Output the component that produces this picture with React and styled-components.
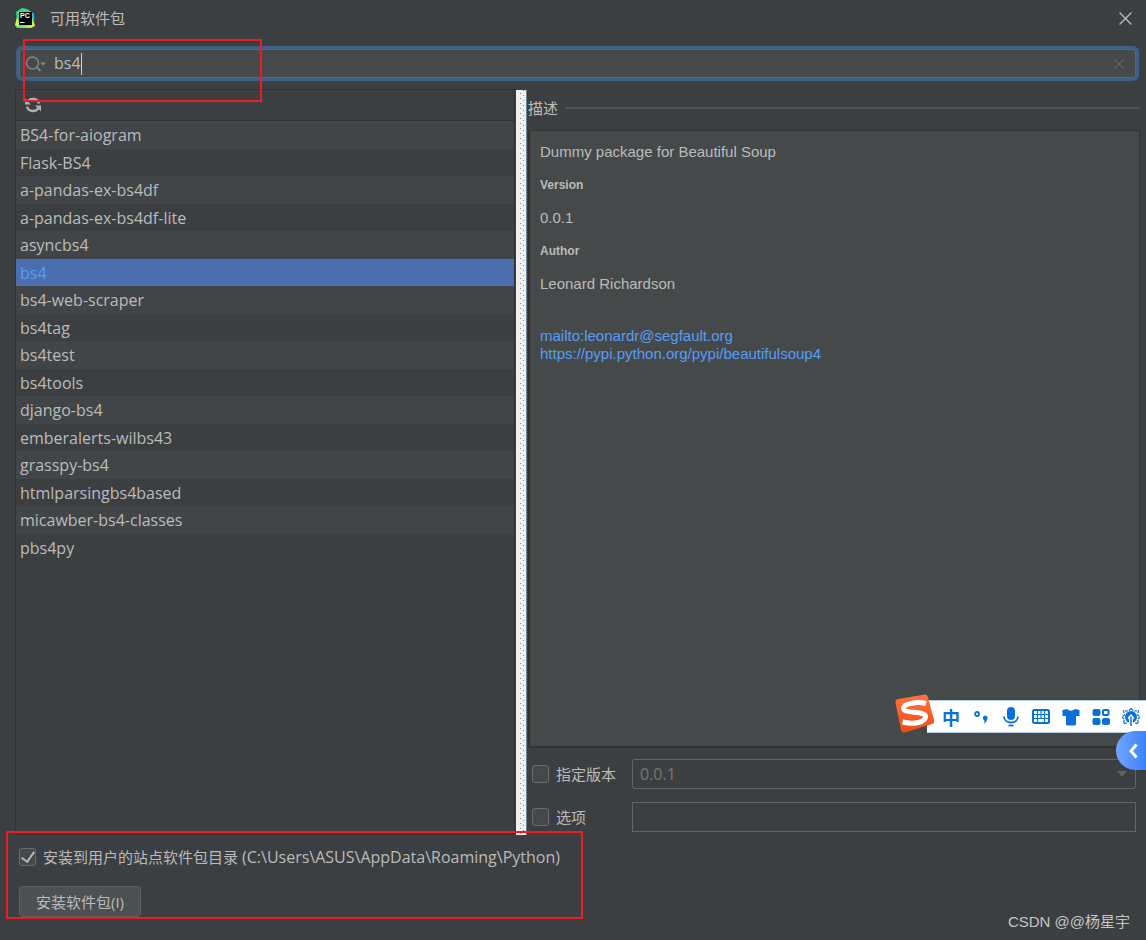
import React, { useState } from 'react';
import styled, { createGlobalStyle } from 'styled-components';

const uiFont = '"Open Sans", "Noto Sans CJK SC", sans-serif';

const GlobalStyle = createGlobalStyle`
  * { box-sizing: border-box; }
  body {
    margin: 0;
    background: #3c3f41;
    color: #bbbbbb;
    font: 15px/20px ${uiFont};
  }
  button, input, select { font: inherit; color: inherit; }
`;

const Dialog = styled.div`
  position: relative;
  display: flex;
  flex-direction: column;
  min-height: 100vh;
  padding: 0 6px 0 15px;
  overflow: hidden;
`;

const TitleBar = styled.header`
  display: flex;
  align-items: center;
  gap: 15px;
  height: 36px;
  margin-bottom: 10px;
`;

const Title = styled.h1`
  flex: 1;
  margin: 0;
  font-size: 15px;
  font-weight: 400;
`;

const IconButton = styled.button`
  display: flex;
  align-items: center;
  justify-content: center;
  width: ${p => p.$size}px;
  height: ${p => p.$size}px;
  padding: 0;
  border: 0;
  background: none;
  color: ${p => p.$color};
`;

const SearchArea = styled.div`
  position: relative;
  margin: 0 1px 8px;
`;

const SearchField = styled.label`
  display: flex;
  align-items: center;
  gap: 7px;
  height: 35px;
  padding: 0 10px 0 6px;
  border: 3px solid #3d6185;
  border-radius: 6px;
  background: #45494a;
  box-shadow: inset 0 0 0 1px #466d94;
`;

const SearchInput = styled.input.attrs({ type: 'text' })`
  flex: 1;
  min-width: 0;
  height: 24px;
  padding: 0 0 2px;
  border: 0;
  outline: 0;
  background: none;
  font-size: 16px;
`;

const Typed = styled.span`
  flex: 1;
  display: grid;
  align-items: center;
  font-size: 16px;
  > * { grid-area: 1 / 1; }
`;

const Caret = styled.span`
  display: flex;
  align-items: center;
  pointer-events: none;
  i { visibility: hidden; font-style: normal; }
  &::after { content: ''; width: 1px; height: 22px; background: #d0d0d0; }
`;

const Highlight = styled.div`
  position: absolute;
  top: ${p => p.$top}px;
  left: ${p => p.$left}px;
  width: ${p => p.$width}px;
  height: ${p => p.$height}px;
  border: 2px solid #ed1c24;
  pointer-events: none;
  z-index: 2;
`;

const Main = styled.main`
  flex: 1;
  display: grid;
  grid-template-columns: 500fr 13px 612fr;
`;

const PackagePane = styled.section`
  display: flex;
  flex-direction: column;
  min-width: 0;
  border: 1px solid #323232;
`;

const Toolbar = styled.div`
  display: flex;
  align-items: center;
  height: 31px;
  padding-left: 8px;
  border-bottom: 1px solid #323232;
`;

const PackageList = styled.ul`
  margin: 0;
  padding: 0;
  list-style: none;
  font-size: 16px;
`;

const PackageRow = styled.li`
  height: 27px;
  padding-left: 4px;
  line-height: 28px;
  white-space: nowrap;
  &:nth-child(odd) { height: 28px; background: #414547; }
  &&[aria-selected='true'] { background: #4b6eaf; color: #589df6; }
`;

const Splitter = styled.div`
  margin: 1px 1px 0;
  border-right: 1px solid #6b7f95;
  background:
    repeating-linear-gradient(#f0f0f0 0 3px, #7f8b97 3px 4px, #f0f0f0 4px 5px) 4px 0 / 1px 100% no-repeat,
    repeating-linear-gradient(#7f8b97 0 1px, #f0f0f0 1px 5px) 7px 0 / 1px 100% no-repeat,
    #f0f0f0;
`;

const DetailPane = styled.section`
  display: flex;
  flex-direction: column;
  min-width: 0;
`;

const SectionTitle = styled.h2`
  display: flex;
  align-items: center;
  gap: 7px;
  height: 38px;
  margin: 0 0 3px;
  font-size: 15px;
  font-weight: 400;
  &::after { content: ''; flex: 1; height: 2px; background: #515151; }
`;

const Description = styled.article`
  flex: 1;
  padding: 12px 10px;
  border: 1px solid #323232;
  border-width: 1px 1px 2px 2px;
  background: #45494a;
  font: 15px/18px "Liberation Sans", sans-serif;
  p { margin: 0 0 15px; }
  h3 { margin: 0 0 15px; font-size: 12px; line-height: 18px; }
`;

const Links = styled.div`
  display: flex;
  flex-direction: column;
  align-items: flex-start;
  padding-top: 19px;
  a { color: #589df6; text-decoration: none; }
`;

const OptionGrid = styled.div`
  display: grid;
  grid-template-columns: 100px minmax(0, 1fr);
  row-gap: 13px;
  padding: 11px 4px 3px;
`;

const CheckLabel = styled.label`
  display: flex;
  align-items: center;
  gap: 7px;
`;

const Path = styled.span`
  margin-left: -3px;
  font-size: 16px;
`;

const Check = styled.input.attrs({ type: 'checkbox' })`
  appearance: none;
  display: grid;
  place-items: center;
  width: 17px;
  height: 18px;
  margin: 0;
  border: 1px solid #6b6b6b;
  border-radius: 3px;
  background: #43494a;
  &:checked::after {
    content: '';
    width: 6px;
    height: 11px;
    margin-bottom: 3px;
    border: solid #bbbbbb;
    border-width: 0 2px 2px 0;
    transform: rotate(35deg);
  }
`;

const SelectBox = styled.div`
  display: grid;
  align-items: center;
  > * { grid-area: 1 / 1; }
  > svg { justify-self: end; margin-right: 8px; pointer-events: none; }
`;

const VersionSelect = styled.select`
  appearance: none;
  width: 100%;
  height: 30px;
  padding: 0 7px;
  border: 1px solid #646464;
  border-radius: 3px;
  background: #3c3f41;
  color: #777777;
  font-size: 16px;
  opacity: 1;
`;

const OptionInput = styled.input.attrs({ type: 'text' })`
  width: 100%;
  height: 30px;
  padding: 0 7px;
  border: 1px solid #646464;
  background: #3c3f41;
`;

const Footer = styled.footer`
  position: relative;
  display: flex;
  flex-direction: column;
  align-items: flex-start;
  gap: 19px;
  padding: 12px 4px 23px;
`;

const InstallButton = styled.button`
  height: 31px;
  padding: 0 16px;
  border: 1px solid #5e6060;
  border-radius: 4px;
  background: #4c5052;
`;

const Watermark = styled.span`
  position: absolute;
  right: 10px;
  bottom: 8px;
  color: #c4c5c6;
  font: 15px/20px "Liberation Sans", "Noto Sans CJK SC", sans-serif;
`;

const ImeBar = styled.aside`
  position: absolute;
  top: 694px;
  right: 0;
  display: flex;
  align-items: flex-start;
  z-index: 3;
  > svg { z-index: 1; }
`;

const ImeTools = styled.div`
  display: flex;
  align-items: center;
  gap: 10px;
  height: 33px;
  margin: 6px 0 0 -8px;
  padding: 0 5px 0 14px;
  border: solid #b5cbe0;
  border-width: 1px 0;
  background: #ffffff;
`;

const ImeMode = styled.button`
  width: 20px;
  padding: 0;
  border: 0;
  background: none;
  color: #0a6fdb;
  font: 700 18px/20px "Noto Sans CJK SC", sans-serif;
`;

const SideTab = styled.button`
  position: absolute;
  top: 731px;
  right: 0;
  display: flex;
  align-items: center;
  justify-content: flex-end;
  width: 30px;
  height: 39px;
  padding: 0 7px 0 0;
  border: 0;
  border-radius: 20px 0 0 20px;
  background: linear-gradient(90deg, #72a5ff, #3b82fa);
  z-index: 4;
`;

const Logo = () => (
  <svg width="20" height="20" viewBox="0 0 20 20" aria-hidden="true">
    <defs>
      <linearGradient id="pcA" x1="0" y1="0" x2="1" y2="1">
        <stop offset="0" stopColor="#21d789" /><stop offset=".5" stopColor="#3be07a" /><stop offset="1" stopColor="#fcf84a" />
      </linearGradient>
    </defs>
    <path d="M1 4 7 0l5 1 3 2 4 3-1 4 2 8-4 2H2L0 17l2-4z" fill="url(#pcA)" />
    <path d="M15 3l4 3 .5 6-3-3z" fill="#07c3f2" />
    <path d="M0 17l2-8 3 8-2 2z" fill="#d9f24f" />
    <rect x="4" y="4" width="13" height="13" fill="#000" />
    <text x="5" y="10" fill="#fff" fontFamily="Liberation Sans, sans-serif" fontWeight="700" fontSize="7">PC</text>
    <path d="M5 14.500h4.500" stroke="#fff" strokeWidth="1" />
  </svg>
);

const Cross = ({ size }) => (
  <svg width={size} height={size} viewBox="0 0 12 12" aria-hidden="true">
    <path d="M.5.5l11 11M11.500.5l-11 11" stroke="currentColor" strokeWidth="1.200" />
  </svg>
);

const SearchIcon = () => (
  <svg width="22" height="18" viewBox="0 0 22 18" fill="none" aria-hidden="true">
    <circle cx="7.500" cy="8" r="6" stroke="#7f8688" strokeWidth="1.500" />
    <path d="M11.500 12l4 4" stroke="#7f8688" strokeWidth="1.800" />
    <path d="M15 7.500h6l-3 3.500z" fill="#7f8688" />
  </svg>
);

const RefreshIcon = () => (
  <svg width="18" height="16" viewBox="0 0 18 16" fill="none" aria-hidden="true">
    <path d="M3.500 5A6.200 5.800 0 0 1 15 6.500M14.500 11A6.200 5.800 0 0 1 3 9.500" stroke="#afb1b3" strokeWidth="2.400" />
    <path d="M1 1.500v6h6zM17 14.500v-6h-6z" fill="#afb1b3" />
  </svg>
);

const SogouLogo = () => (
  <svg width="40" height="40" viewBox="0 0 40 40" aria-hidden="true">
    <defs>
      <linearGradient id="sogou" x1="0" y1="0" x2="0" y2="1">
        <stop offset="0" stopColor="#ff7340" /><stop offset="1" stopColor="#f04b12" />
      </linearGradient>
    </defs>
    <path d="M3 5 30 .5q2-.2 2.800 2L39 26q.8 3-2 4L10 38.500q-3 .5-4-2.500L.5 9Q.2 5.800 3 5z" fill="url(#sogou)" />
    <path d="M31 9.500C23 7.500 8.500 9 8.500 14.500c0 5.500 23 2 22 8.500-1 6-13 7.500-23 5" fill="none" stroke="#fff" strokeWidth="5" />
  </svg>
);

const ImeIcon = ({ children }) => (
  <svg width="20" height="20" viewBox="0 0 20 20" fill="none" stroke="#0a6fdb" aria-hidden="true">{children}</svg>
);

const imeTools = [
  ['标点', <g key="g"><circle cx="6" cy="7" r="2" strokeWidth="1.800" /><path d="M12 11a2.300 2.300 0 1 1 4.300 1q-.5 3.500-3.500 5 .8-1.500.8-3.200-1.600-.5-1.600-2.800z" fill="#0a6fdb" stroke="none" /></g>],
  ['语音', <g key="g"><rect x="6" y="0" width="8" height="13" rx="4" fill="#0a6fdb" stroke="none" /><path d="M3 9.500c0 8 14 8 14 0" strokeWidth="1.800" /><path d="M7.500 18.500h5" strokeWidth="1.800" /></g>],
  ['键盘', <g key="g"><rect x="2" y="3" width="16" height="13" rx="1.500" strokeWidth="2" /><path d="M3 7.500h14M3 11.500h14" strokeWidth="1.200" /><path d="M6.500 4v7.500M10 4v7.500M13.500 4v7.500M6.500 12v4M13.500 12v4" strokeWidth="1.200" /></g>],
  ['皮肤', <path key="g" d="M6 2q4 3.500 8 0l4.500 1v6h-3.500v8q0 1.500-1.500 1.500h-7Q5 18.500 5 17V9H1.500V3z" fill="#0a6fdb" stroke="none" />],
  ['工具箱', <g key="g" fill="#0a6fdb" stroke="none"><rect x="1.500" y="2" width="8" height="7" rx="2" /><rect x="1.500" y="11" width="8" height="7" rx="2" /><rect x="11" y="11" width="8" height="7" rx="2" /><rect x="12" y="3" width="5.500" height="5" rx="1" fill="none" stroke="#0a6fdb" strokeWidth="2" /></g>],
  ['智能', <g key="g"><path d="M10 1.500 12.500 4l5-.2-1 4L19 10l-2.500 2.500 1 4-4-.5M10 1.500 7.500 4l-5-.2 1 4L1 10l2.500 2.500-1 4 4-.5" strokeWidth="1.200" strokeDasharray="3 1" /><circle cx="10" cy="10" r="6" fill="#0a6fdb" stroke="none" /><path d="M10 9v10" stroke="#fff" strokeWidth="4" /><path d="M10 8v11" strokeWidth="1.500" /><path d="M7 11.500 10 8l3 3.500" stroke="#fff" strokeWidth="1.200" /></g>],
];

const packages = [
  'BS4-for-aiogram', 'Flask-BS4', 'a-pandas-ex-bs4df', 'a-pandas-ex-bs4df-lite',
  'asyncbs4', 'bs4', 'bs4-web-scraper', 'bs4tag', 'bs4test', 'bs4tools', 'django-bs4',
  'emberalerts-wilbs43', 'grasspy-bs4', 'htmlparsingbs4based', 'micawber-bs4-classes', 'pbs4py',
];

export default function App() {
  const [query, setQuery] = useState('bs4');
  const [selected, setSelected] = useState('bs4');

  return (
    <Dialog>
      <GlobalStyle />
      <TitleBar>
        <Logo />
        <Title>可用软件包</Title>
        <IconButton $size={30} $color="#bbbbbb" aria-label="关闭"><Cross size={13} /></IconButton>
      </TitleBar>

      <SearchArea>
        <SearchField>
          <SearchIcon />
          <Typed>
            <SearchInput aria-label="搜索" value={query} onChange={e => setQuery(e.target.value)} />
            <Caret aria-hidden="true"><i>{query}</i></Caret>
          </Typed>
          <IconButton $size={14} $color="#6e7274" aria-label="清除" onClick={() => setQuery('')}><Cross size={10} /></IconButton>
        </SearchField>
        <Highlight $top={-7} $left={7} $width={239} $height={63} />
      </SearchArea>

      <Main>
        <PackagePane>
          <Toolbar>
            <IconButton $size={18} $color="#afb1b3" aria-label="重新加载"><RefreshIcon /></IconButton>
          </Toolbar>
          <PackageList role="listbox" aria-label="软件包">
            {packages.map(name => (
              <PackageRow key={name} role="option" aria-selected={name === selected} onClick={() => setSelected(name)}>
                {name}
              </PackageRow>
            ))}
          </PackageList>
        </PackagePane>
        <Splitter role="separator" aria-orientation="vertical" />
        <DetailPane>
          <SectionTitle>描述</SectionTitle>
          <Description>
            <p>Dummy package for Beautiful Soup</p>
            <h3>Version</h3>
            <p>0.0.1</p>
            <h3>Author</h3>
            <p>Leonard Richardson</p>
            <Links>
              <a href="mailto:leonardr@segfault.org">mailto:leonardr@segfault.org</a>
              <a href="https://pypi.python.org/pypi/beautifulsoup4">https://pypi.python.org/pypi/beautifulsoup4</a>
            </Links>
          </Description>
          <OptionGrid>
            <CheckLabel><Check />指定版本</CheckLabel>
            <SelectBox>
              <VersionSelect aria-label="版本" disabled><option>0.0.1</option></VersionSelect>
              <svg width="12" height="7" viewBox="0 0 12 7" aria-hidden="true"><path d="M1 0h10L6 6z" fill="#5e6162" /></svg>
            </SelectBox>
            <CheckLabel><Check />选项</CheckLabel>
            <OptionInput aria-label="选项" />
          </OptionGrid>
        </DetailPane>
      </Main>

      <Footer>
        <CheckLabel>
          <Check defaultChecked />
          安装到用户的站点软件包目录
          <Path>(C:\Users\ASUS\AppData\Roaming\Python)</Path>
        </CheckLabel>
        <InstallButton>安装软件包(I)</InstallButton>
        <Highlight $top={-4} $left={-9} $width={577} $height={88} />
        <Watermark>CSDN @@杨星宇</Watermark>
      </Footer>

      <ImeBar>
        <SogouLogo />
        <ImeTools>
          <ImeMode>中</ImeMode>
          {imeTools.map(([label, art]) => (
            <IconButton key={label} $size={20} $color="#0a6fdb" aria-label={label}><ImeIcon>{art}</ImeIcon></IconButton>
          ))}
        </ImeTools>
      </ImeBar>
      <SideTab aria-label="展开">
        <svg width="11" height="16" viewBox="0 0 11 16" fill="none" aria-hidden="true"><path d="M8.500 1.500 3 8l5.500 6.500" stroke="#fff" strokeWidth="3" /></svg>
      </SideTab>
    </Dialog>
  );
}
